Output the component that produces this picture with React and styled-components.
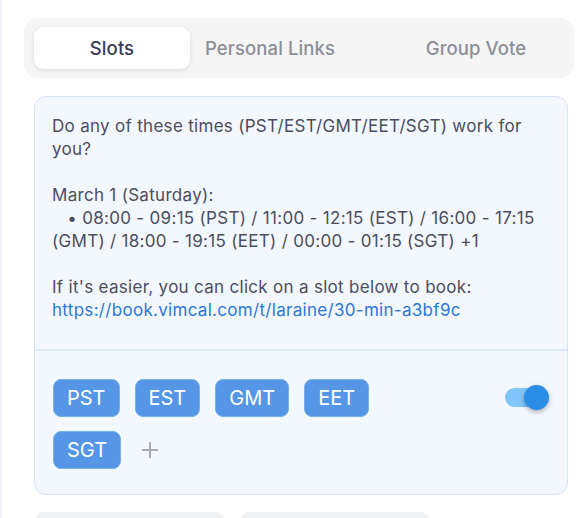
import styled, { createGlobalStyle } from 'styled-components'

const GlobalStyle = createGlobalStyle`
  body {
    margin: 0;
    background: #ffffff;
    font-family: Inter, "Noto Sans", sans-serif;
  }
`

const Page = styled.div`
  min-height: 518px;
  border-left: 2px solid #eef0f5;
  padding: 18px 6px 0 22px;
  box-sizing: border-box;
  overflow: hidden;
`

const TabBar = styled.div`
  display: flex;
  align-items: center;
  height: 60px;
  padding: 0 10px;
  background: #f5f5f6;
  border-radius: 14px;
  box-sizing: border-box;
`

const Tab = styled.div`
  width: ${(p) => p.$w}px;
  margin-left: ${(p) => p.$ml || 0}px;
  height: 42px;
  display: flex;
  align-items: center;
  justify-content: center;
  border-radius: 9px;
  font-size: 18.5px;
  font-weight: 500;
  letter-spacing: 0.1px;
  color: ${(p) => (p.$active ? '#3a3c55' : '#8c8f96')};
  background: ${(p) => (p.$active ? '#ffffff' : 'transparent')};
  box-shadow: ${(p) => (p.$active ? '0 1px 4px rgba(0, 0, 0, 0.12)' : 'none')};
`

const Card = styled.div`
  margin: 18px 0 0 10px;
  width: 534px;
  background: #f3f7fe;
  border: 1px solid #d5e4f9;
  border-radius: 12px;
  box-sizing: border-box;
`

const Message = styled.div`
  padding: 18px 14px 27px 17px;
  font-size: 17px;
  line-height: 23px;
  color: #4b4d5f;
  white-space: pre-wrap;
  letter-spacing: 0.3px;
`

const Link = styled.span`
  color: #2a78d6;
`

const Divider = styled.div`
  height: 2px;
  background: #dce8f8;
`

const Footer = styled.div`
  display: flex;
  justify-content: space-between;
  align-items: flex-start;
  padding: 28px 16px 25px 18px;
`

const Chips = styled.div`
  display: flex;
  flex-wrap: wrap;
  align-items: center;
  column-gap: 15px;
  row-gap: 14px;
  max-width: 340px;
`

const Chip = styled.div`
  height: 38px;
  padding: 0 13px;
  display: flex;
  align-items: center;
  border-radius: 8px;
  background: #5596e6;
  border: 1px solid #7aaef0;
  box-sizing: border-box;
  color: #ffffff;
  font-size: 20px;
  font-weight: 400;
`

const AddButton = styled.div`
  width: 22px;
  height: 38px;
  display: flex;
  align-items: center;
  justify-content: center;
  margin-left: 3px;
`

const Toggle = styled.div`
  position: relative;
  width: 40px;
  height: 19px;
  margin: 9px 6px 0 0;
  border-radius: 10px;
  background: #81c6fb;
`

const Knob = styled.div`
  position: absolute;
  right: -4px;
  top: -3px;
  width: 25px;
  height: 25px;
  border-radius: 50%;
  background: #2a8ee6;
  box-shadow: 0 2px 5px rgba(0, 0, 0, 0.3);
`

const BottomRow = styled.div`
  display: flex;
  gap: 15px;
  margin: 17px 0 0 11px;
`

const Ghost = styled.div`
  width: ${(p) => p.$w}px;
  height: 30px;
  background: #f1f2f4;
  border-radius: 9px;
`

const text = `Do any of these times (PST/EST/GMT/EET/SGT) work for you?

March 1 (Saturday):
   • 08:00 - 09:15 (PST) / 11:00 - 12:15 (EST) / 16:00 - 17:15 (GMT) / 18:00 - 19:15 (EET) / 00:00 - 01:15 (SGT) +1

If it's easier, you can click on a slot below to book:
`

const zones = ['PST', 'EST', 'GMT', 'EET', 'SGT']

export default function App() {
  return (
    <Page>
      <GlobalStyle />
      <TabBar>
        <Tab $active $w={156}>Slots</Tab>
        <Tab $w={160}>Personal Links</Tab>
        <Tab $w={160} $ml={46}>Group Vote</Tab>
      </TabBar>
      <Card>
        <Message>
          {text}
          <Link>https://book.vimcal.com/t/laraine/30-min-a3bf9c</Link>
        </Message>
        <Divider />
        <Footer>
          <Chips>
            {zones.map((z) => (
              <Chip key={z}>{z}</Chip>
            ))}
            <AddButton>
              <svg width="18" height="18" viewBox="0 0 18 18">
                <path d="M9 1v16M1 9h16" stroke="#a9acb6" strokeWidth="2" fill="none" />
              </svg>
            </AddButton>
          </Chips>
          <Toggle>
            <Knob />
          </Toggle>
        </Footer>
      </Card>
      <BottomRow>
        <Ghost $w={190} />
        <Ghost $w={190} />
      </BottomRow>
    </Page>
  )
}
